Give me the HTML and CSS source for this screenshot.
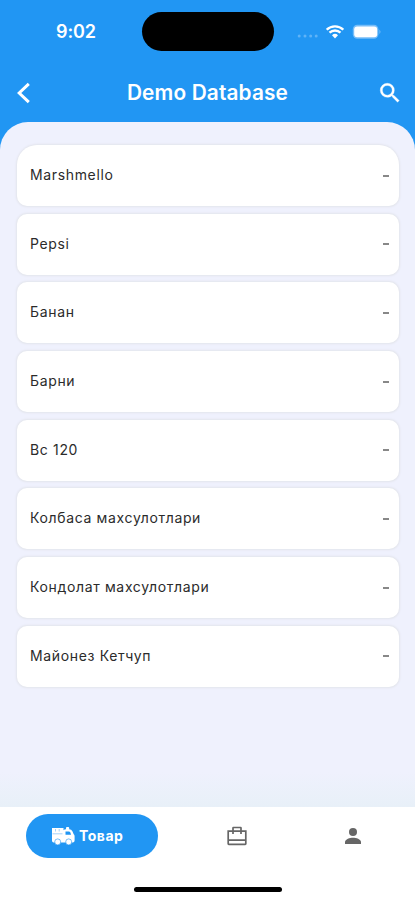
FILE: index.html
```html
<!DOCTYPE html>
<html lang="uz">
<head>
<meta charset="utf-8">
<title>Demo Database</title>
<link rel="stylesheet" href="styles.css">
</head>
<body>
<div class="app">
  <div class="status">
    <span class="time">9:02</span>
    <div class="island"></div>
    <div class="indicators">
      <svg class="signal" width="22" height="4" viewBox="0 0 22 4"><circle cx="2.2" cy="2" r="1.5"/><circle cx="8" cy="2" r="1.5"/><circle cx="13.7" cy="2" r="1.5"/><circle cx="19.2" cy="2" r="1.5"/></svg>
      <svg class="wifi" width="18" height="14" viewBox="0 0 18 14"><path d="M.7 4.7a12 12 0 0 1 16.6 0" /><path d="M3.5 7.7a8 8 0 0 1 11 0"/><path class="dot" d="M6 10.2a4.4 4.4 0 0 1 6 0L9 13.6Z"/></svg>
      <svg class="battery" width="30" height="16" viewBox="0 0 30 16"><rect class="shell" x=".8" y=".8" width="25.6" height="14" rx="4.5"/><rect class="charge" x="2.2" y="2.6" width="23" height="10.6" rx="3"/><path class="shell" d="M27.4 5.5q2.2 2.3 0 4.6Z"/></svg>
    </div>
  </div>
  <header class="bar">
    <svg class="back" width="14" height="22" viewBox="0 0 14 22"><path d="M11.8 1.8 2.2 11l9.6 9.2"/></svg>
    <h1>Demo Database</h1>
    <svg class="search" width="26" height="26" viewBox="0 0 24 24"><path d="M15.5 14h-.79l-.28-.27A6.47 6.47 0 0 0 16 9.5A6.5 6.5 0 1 0 9.5 16c1.61 0 3.09-.59 4.23-1.57l.27.28v.79l5 4.99L20.49 19l-4.99-5Zm-6 0a4.5 4.5 0 1 1 0-9 4.5 4.5 0 0 1 0 9Z"/></svg>
  </header>
  <main class="panel">
    <ul class="list">
      <li><span class="name">Marshmello</span><i></i></li>
      <li><span class="name">Pepsi</span><i></i></li>
      <li><span class="name">Банан</span><i></i></li>
      <li><span class="name">Барни</span><i></i></li>
      <li><span class="name">Вс 120</span><i></i></li>
      <li><span class="name">Колбаса махсулотлари</span><i></i></li>
      <li><span class="name">Кондолат махсулотлари</span><i></i></li>
      <li><span class="name">Майонез Кетчуп</span><i></i></li>
    </ul>
  </main>
  <footer class="dock">
    <nav class="tabs">
      <a class="active">
        <svg width="24" height="20" viewBox="0 0 24 20"><path class="w" d="M1 2h11.5v2.200q.8-.9 2.500-.9V2q0-1 1-1h1.200q1 0 1 1v1.300q2.300.2 3.200 2l1.300 3q.9.700.9 1.900v4.300q0 1.900-1.900 1.900H2.700Q1 16.400 1 14.700z"/><path class="hole" d="M1.500 7.800h10M4.500 3v2.500M8.200 3v2.500"/><path class="b" d="M14.500 5.600h3.200q1.200 0 1.600 1l.8 2.200h-5.600z"/><g class="wheel"><circle cx="6.700" cy="15.900" r="3"/><circle cx="17.700" cy="15.900" r="3"/></g></svg>
        <span>Товар</span>
      </a>
      <a class="tab"><svg width="22" height="20" viewBox="0 0 22 20"><path d="M2.200 5.200h17.600v12.600q0 .6-.6.6H2.800q-.6 0-.6-.6ZM2.200 14.100h17.600M7 8V1.900q0-.4.4-.4h7.200q.4 0 .4.400V8"/></svg></a>
      <a class="tab user"><svg width="18" height="18" viewBox="0 0 18 18"><circle cx="9" cy="5" r="4"/><path d="M1 17v-2c0-2.700 5-4.200 8-4.200s8 1.500 8 4.200v2Z"/></svg></a>
    </nav>
    <div class="home"></div>
  </footer>
</div>
</body>
</html>
```
FILE: styles.css
```css
* { box-sizing: border-box; }
body { margin: 0; font-family: Inter, "Liberation Sans", sans-serif; }
.app { width: 415px; height: 900px; display: flex; flex-direction: column; background: #2196f3; overflow: hidden; }
.status { height: 63px; display: grid; grid-template-columns: 142px 132px 1fr; align-items: center; color: #fff; }
.time { margin-left: 56px; font-size: 18px; font-weight: 600; letter-spacing: -.1px; }
.island { height: 39px; border-radius: 20px; background: #000; }
.indicators { display: flex; align-items: center; }
.signal { margin: 9px 0 0 23px; fill: #5fb3f7; }
.wifi { margin-left: 7px; fill: none; stroke: #fff; stroke-width: 2.3; }
.wifi .dot { fill: #fff; stroke: none; }
.battery { margin-left: 8px; }
.shell { fill: #76bdf8; }
.charge { fill: #fff; }
.bar { height: 59px; display: grid; grid-template-columns: 50px 1fr 50px; align-items: center; color: #fff; }
.back { margin-left: 17px; fill: none; stroke: #fff; stroke-width: 3; }
.bar h1 { margin: 0; text-align: center; font-size: 20.8px; line-height: 28px; font-weight: 600; white-space: nowrap; letter-spacing: .15px; }
.search { margin-left: 12px; fill: #fff; stroke: #fff; stroke-width: .3; }
.panel { flex: 1; padding: 23px 16px 0 17px; background: linear-gradient(#eff1fd 650px, #e8f0f8 685px); border-radius: 28px 28px 0 0; }
.list { margin: 0; padding: 0; list-style: none; display: grid; gap: 7.7px; }
.list li { height: 61px; padding: 0 10px 0 13px; display: flex; align-items: center; justify-content: space-between; border-radius: 10px; background: #fff; box-shadow: 0 0 2px 1px #e3e5ec; }
.list li:first-child { border-radius: 20px 20px 10px 10px; }
.name { padding-bottom: 1px; font-size: 14px; line-height: 20px; color: #2b2b2b; letter-spacing: .65px; }
.list i { width: 6px; height: 2px; background: #888; }
.dock { height: 93px; background: #fff; display: flex; flex-direction: column; align-items: center; }
.tabs { width: 415px; height: 58px; display: grid; grid-template-columns: 157px 160px 1fr; align-items: center; }
.active { width: 132px; height: 44px; margin-left: 26px; padding-left: 25px; display: flex; align-items: center; gap: 4px; border-radius: 22px; background: #2196f3; color: #fff; font-size: 14px; font-weight: 700; letter-spacing: .5px; line-height: 18px; }
.w { fill: #fff; }
.hole { fill: none; stroke: #8cc8f9; stroke-width: .8; }
.b { fill: #2196f3; }
.wheel { fill: #fff; stroke: #2196f3; stroke-width: .6; }
.tab { display: flex; justify-content: center; }
.tab svg { fill: none; stroke: #666; stroke-width: 1.7; }
.user { padding-right: 26px; }
.user svg { fill: #666; stroke: none; }
.home { width: 148px; height: 5px; margin-top: 22px; border-radius: 3px; background: #000; }
```
